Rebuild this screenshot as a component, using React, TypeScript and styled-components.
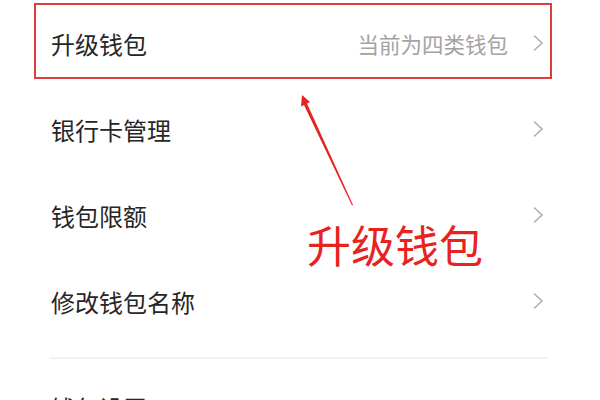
import styled, { createGlobalStyle } from "styled-components";

const GlobalStyle = createGlobalStyle`
  html, body {
    margin: 0;
    padding: 0;
    background: #ffffff;
    font-family: "Noto Sans CJK SC", "Noto Sans", sans-serif;
    overflow: hidden;
  }
`;

const Page = styled.div`
  position: relative;
  width: 600px;
  height: 400px;
  overflow: hidden;
  background: #ffffff;
`;

const Menu = styled.ul`
  list-style: none;
  margin: 0;
  padding: 0 56px 0 51px;
`;

const Row = styled.li`
  height: 86px;
  display: flex;
  align-items: center;
  justify-content: space-between;
`;

const Label = styled.span`
  font-size: 24px;
  color: #262626;
`;

const Right = styled.div`
  display: flex;
  align-items: center;
  gap: 24px;
`;

const Hint = styled.span`
  font-size: 21.5px;
  color: #a3a3a3;
`;

const Divider = styled.hr`
  margin: 13px -4px 0 -1px;
  border: 0;
  height: 2px;
  background: #f2f2f2;
`;

const SectionRow = styled(Row)`
  align-items: flex-start;
  padding-top: 31px;
  box-sizing: border-box;
`;

// annotations drawn over the screenshot
const HighlightBox = styled.div`
  position: absolute;
  left: 34px;
  top: 3px;
  width: 514px;
  height: 72px;
  border: 2px solid #de3b3b;
`;

const ArrowSvg = styled.svg`
  position: absolute;
  left: 290px;
  top: 88px;
`;

const Callout = styled.div`
  position: absolute;
  left: 307px;
  top: 218px;
  font-size: 44px;
  color: #e8231f;
  line-height: 1.2;
`;

function Chevron() {
  return (
    <svg width="12" height="18" viewBox="0 0 12 18">
      <path d="M2 1.5 L10 9 L2 16.5" fill="none" stroke="#b0b0b0" strokeWidth="1.6" />
    </svg>
  );
}

const items = [
  { label: "升级钱包", hint: "当前为四类钱包" },
  { label: "银行卡管理" },
  { label: "钱包限额" },
  { label: "修改钱包名称" },
];

export default function App() {
  return (
    <Page>
      <GlobalStyle />
      <Menu>
        {items.map((item) => (
          <Row key={item.label}>
            <Label>{item.label}</Label>
            <Right>
              {item.hint && <Hint>{item.hint}</Hint>}
              <Chevron />
            </Right>
          </Row>
        ))}
      </Menu>
      <Menu>
        <Divider />
        <SectionRow>
          <Label>钱包设置</Label>
        </SectionRow>
      </Menu>
      <HighlightBox />
      <ArrowSvg width="80" height="125" viewBox="0 0 80 125">
        <polygon points="12,7 20,14 17,15.5 63,117 62,117.5 14,17 11,18.5" fill="#e5231c" />
      </ArrowSvg>
      <Callout>升级钱包</Callout>
    </Page>
  );
}
